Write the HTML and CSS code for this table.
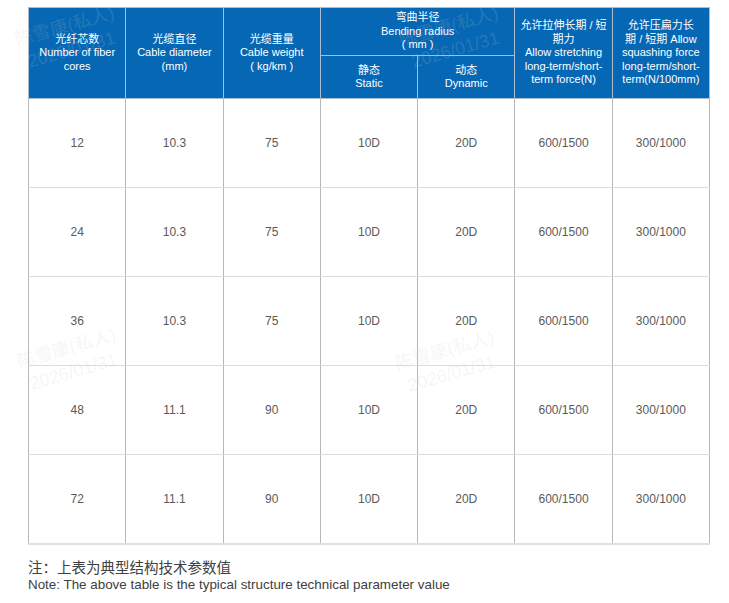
FILE: index.html
```html
<!DOCTYPE html>
<html lang="zh-CN">
<head>
<meta charset="utf-8">
<title>光缆参数表</title>
<link rel="stylesheet" href="styles.css">
</head>
<body>
<div class="page">
  <table class="spec">
    <colgroup>
      <col><col><col><col><col><col><col>
    </colgroup>
    <thead>
      <tr class="h1">
        <th rowspan="2">光纤芯数<br>Number of fiber<br>cores</th>
        <th rowspan="2">光缆直径<br>Cable diameter<br>(mm)</th>
        <th rowspan="2">光缆重量<br>Cable weight<br>( kg/km )</th>
        <th colspan="2">弯曲半径<br>Bending radius<br>( mm )</th>
        <th rowspan="2">允许拉伸长期 / 短<br>期力<br>Allow stretching<br>long-term/short-<br>term force(N)</th>
        <th rowspan="2">允许压扁力长<br>期 / 短期 Allow<br>squashing force<br>long-term/short-<br>term(N/100mm)</th>
      </tr>
      <tr class="h2">
        <th>静态<br>Static</th>
        <th>动态<br>Dynamic</th>
      </tr>
    </thead>
    <tbody>
      <tr><td>12</td><td>10.3</td><td>75</td><td>10D</td><td>20D</td><td>600/1500</td><td>300/1000</td></tr>
      <tr><td>24</td><td>10.3</td><td>75</td><td>10D</td><td>20D</td><td>600/1500</td><td>300/1000</td></tr>
      <tr><td>36</td><td>10.3</td><td>75</td><td>10D</td><td>20D</td><td>600/1500</td><td>300/1000</td></tr>
      <tr><td>48</td><td>11.1</td><td>90</td><td>10D</td><td>20D</td><td>600/1500</td><td>300/1000</td></tr>
      <tr><td>72</td><td>11.1</td><td>90</td><td>10D</td><td>20D</td><td>600/1500</td><td>300/1000</td></tr>
    </tbody>
  </table>
  <p class="note-cn">注：上表为典型结构技术参数值</p>
  <p class="note-en">Note: The above table is the typical structure technical parameter value</p>

  <div class="wm wm-a"><span>陈雪康(私人)</span><span>2026/01/31</span></div>
  <div class="wm wm-b"><span>陈雪康(私人)</span><span>2026/01/31</span></div>
  <div class="wm wm-c"><span>陈雪康(私人)</span><span>2026/01/31</span></div>
  <div class="wm wm-d"><span>陈雪康(私人)</span><span>2026/01/31</span></div>
</div>
</body>
</html>
```

FILE: styles.css
```css
html, body {
  margin: 0;
  padding: 0;
  background: #ffffff;
}

body {
  font-family: "Liberation Sans", Arial, "Noto Sans CJK SC", sans-serif;
}

.page {
  position: relative;
  padding: 7px 0 0 28px;
  width: 682px;
  height: 596px;
  overflow: hidden;
}

.spec {
  width: 682px;
  table-layout: fixed;
  border-collapse: collapse;
}

.spec th {
  background: #0667b5;
  color: #ffffff;
  font-weight: normal;
  font-size: 11px;
  line-height: 13.5px;
  text-align: center;
  vertical-align: middle;
  padding: 0;
  border: 1px solid #a9bcd0;
  white-space: nowrap;
}

.spec tr.h1 th[colspan] {
  height: 47px;
}

.spec tr.h2 th {
  height: 42px;
}

.spec td {
  height: 88px;
  padding: 0;
  text-align: center;
  vertical-align: middle;
  font-size: 12px;
  color: #5a5a5a;
  border-top: 1px solid #dcdcdc;
  border-bottom: 1px solid #dcdcdc;
  border-left: 1px solid #b8b8b8;
  border-right: 1px solid #b8b8b8;
}

.spec tbody tr:last-child td {
  border-bottom: 2px solid #e0e0e0;
}

.note-cn {
  margin: 14px 0 0 0;
  font-size: 14.5px;
  line-height: 18px;
  color: #404040;
}

.note-en {
  margin: 0;
  font-size: 13.4px;
  line-height: 16px;
  color: #404040;
}

.wm {
  position: absolute;
  display: flex;
  flex-direction: column;
  align-items: flex-start;
  transform: translate(-50%, -50%) rotate(-16deg);
  font-size: 18px;
  line-height: 24px;
  color: rgba(200, 200, 200, 0.18);
  pointer-events: none;
  white-space: nowrap;
}

.wm span:last-child {
  padding-left: 6px;
}

.wm-a { left: 68px; top: 38px; }
.wm-b { left: 452px; top: 38px; }
.wm-c { left: 70px; top: 360px; }
.wm-d { left: 448px; top: 362px; }
```
